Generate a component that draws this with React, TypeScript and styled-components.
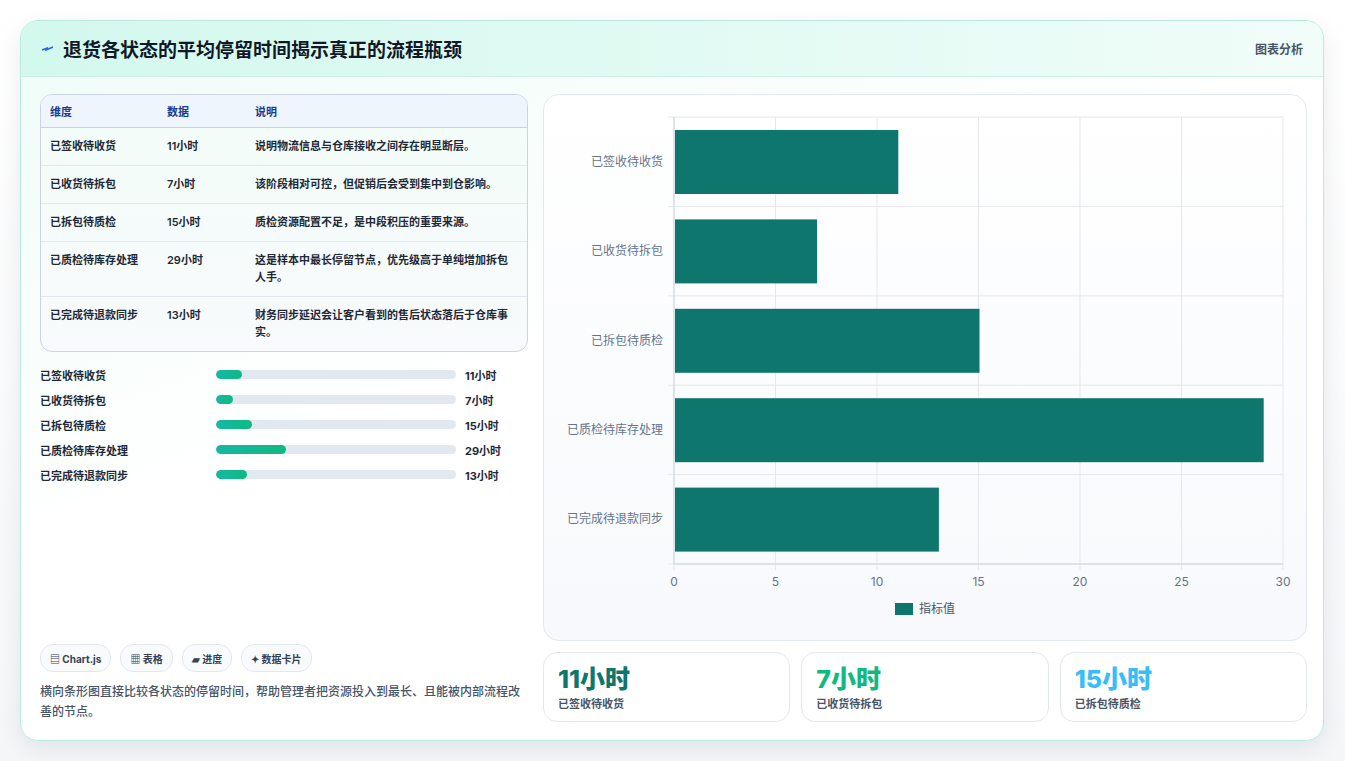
import styled, { createGlobalStyle } from "styled-components";

const GlobalStyle = createGlobalStyle`
  html, body { margin: 0; padding: 0; background: #f3f5f7; }
  body { font-family: Inter, "Noto Sans CJK SC", sans-serif; color: #1f2937; }
`;

const Page = styled.div`
  width: 1345px;
  height: 761px;
  padding: 20px 21px 22px 20px;
  box-sizing: border-box;
  background: linear-gradient(#ffffff 0%, #f4f6f8 100%);
`;

const Card = styled.div`
  height: 100%;
  border: 1px solid #b7ebe0;
  border-radius: 18px;
  background: linear-gradient(160deg, #eefcf7 0%, #ffffff 45%, #ffffff 100%);
  box-shadow: 0 8px 24px rgba(15, 23, 42, 0.08);
  overflow: hidden;
  display: flex;
  flex-direction: column;
`;

const Header = styled.div`
  height: 55px;
  flex-shrink: 0;
  display: flex;
  align-items: center;
  justify-content: space-between;
  padding: 0 20px;
  background: linear-gradient(90deg, #d3f8ee 0%, #e4fbf4 60%, #f1fdf9 100%);
  border-bottom: 1px solid #cdeee5;
`;

const Title = styled.h1`
  margin: 0;
  font-size: 19px;
  font-weight: 700;
  color: #111827;
  display: flex;
  align-items: center;
  gap: 8px;
`;

const HeaderLink = styled.span`
  font-size: 12px;
  color: #475569;
  font-weight: 600;
`;

const Body = styled.div`
  flex: 1;
  display: grid;
  grid-template-columns: 488px 1fr;
  gap: 15px;
  padding: 17px 18px 18px 19px;
  min-height: 0;
`;

const Left = styled.div`
  display: flex;
  flex-direction: column;
  min-height: 0;
`;

const TableBox = styled.div`
  border: 1px solid #cbd5e1;
  border-radius: 12px;
  overflow: hidden;
  background: linear-gradient(#f2fdf8, #f8fafc);
`;

const Table = styled.table`
  width: 100%;
  border-collapse: collapse;
  font-size: 11px;
  font-weight: 600;
  color: #1f2937;
  th {
    text-align: left;
    background: #eef5fd;
    color: #1e3a8a;
    font-weight: 700;
    height: 32px;
    padding: 0 9px;
    border-bottom: 1px solid #cbd5e1;
  }
  td {
    padding: 10px 9px;
    line-height: 17px;
    vertical-align: top;
    border-bottom: 1px solid #e2e8f0;
  }
  tr:last-child td { border-bottom: none; }
`;

const Bars = styled.div`
  margin-top: 10px;
  display: flex;
  flex-direction: column;
`;

const BarRow = styled.div`
  height: 25px;
  display: grid;
  grid-template-columns: 176px 240px 1fr;
  gap: 0 0;
  align-items: center;
  font-size: 11px;
  font-weight: 600;
`;

const Track = styled.div`
  height: 9px;
  border-radius: 5px;
  background: #e2e8f0;
  overflow: hidden;
`;

const Fill = styled.div`
  height: 100%;
  border-radius: 5px;
  background: linear-gradient(90deg, #14b8a6, #10b981);
`;

const BarValue = styled.span`
  padding-left: 9px;
  font-weight: 700;
`;

const Footer = styled.div`
  margin-top: auto;
`;

const Tags = styled.div`
  display: flex;
  gap: 9px;
`;

const Tag = styled.span`
  height: 26px;
  padding: 0 9px;
  border: 1px solid #e2e8f0;
  border-radius: 13px;
  background: #f8fafc;
  display: inline-flex;
  align-items: center;
  gap: 4px;
  font-size: 10px;
  font-weight: 700;
  color: #334155;
`;

const Note = styled.p`
  margin: 10px 0 0;
  font-size: 12px;
  line-height: 20px;
  color: #475569;
  font-weight: 500;
`;

const Right = styled.div`
  display: flex;
  flex-direction: column;
  gap: 11px;
  min-height: 0;
`;

const ChartPanel = styled.div`
  flex: 1;
  border: 1px solid #e2e8f0;
  border-radius: 16px;
  background: linear-gradient(#ffffff, #f7f9fc);
`;

const Stats = styled.div`
  display: grid;
  grid-template-columns: repeat(3, 1fr);
  gap: 11px;
  height: 73px;
`;

const Stat = styled.div`
  border: 1px solid #e2e8f0;
  border-radius: 14px;
  background: #ffffff;
  padding: 10px 14px;
  display: flex;
  flex-direction: column;
`;

const StatValue = styled.div<{ $color: string }>`
  font-size: 25px;
  font-weight: 800;
  line-height: 32px;
  color: ${(p) => p.$color};
`;

const StatLabel = styled.div`
  font-size: 11px;
  color: #475569;
  font-weight: 600;
`;

const rows = [
  { name: "已签收待收货", v: 11, d: "说明物流信息与仓库接收之间存在明显断层。" },
  { name: "已收货待拆包", v: 7, d: "该阶段相对可控，但促销后会受到集中到仓影响。" },
  { name: "已拆包待质检", v: 15, d: "质检资源配置不足，是中段积压的重要来源。" },
  { name: "已质检待库存处理", v: 29, d: "这是样本中最长停留节点，优先级高于单纯增加拆包人手。" },
  { name: "已完成待退款同步", v: 13, d: "财务同步延迟会让客户看到的售后状态落后于仓库事实。" },
];

function Chart() {
  const x0 = 130, x1 = 739, y0 = 22, y1 = 469;
  const unit = (x1 - x0) / 30;
  const band = (y1 - y0) / 5;
  return (
    <svg width="762" height="541" viewBox="0 0 762 541">
      {[0, 5, 10, 15, 20, 25, 30].map((t) => (
        <g key={t}>
          <line x1={x0 + t * unit} x2={x0 + t * unit} y1={y0} y2={y1 + 6} stroke="#e5e7eb" />
          <text x={x0 + t * unit} y={y1 + 22} fontSize="12" fill="#64748b" textAnchor="middle" fontFamily="Inter, sans-serif">{t}</text>
        </g>
      ))}
      {[0, 1, 2, 3, 4, 5].map((i) => (
        <line key={i} x1={x0 - 6} x2={x1} y1={y0 + i * band} y2={y0 + i * band} stroke="#e5e7eb" />
      ))}
      <line x1={x0} x2={x0} y1={y0} y2={y1} stroke="#cbd5e1" />
      <line x1={x0} x2={x1} y1={y1} y2={y1} stroke="#cbd5e1" />
      {rows.map((r, i) => (
        <g key={r.name}>
          <rect x={x0 + 1} y={y0 + i * band + 13} width={r.v * unit} height={64} fill="#0f766e" />
          <text x={x0 - 11} y={y0 + i * band + band / 2 + 4} fontSize="12" fill="#64748b" textAnchor="end" fontFamily="'Noto Sans CJK SC', sans-serif">{r.name}</text>
        </g>
      ))}
      <rect x="351" y="508" width="18" height="12" fill="#0f766e" />
      <text x="375" y="518" fontSize="12" fill="#475569" fontFamily="'Noto Sans CJK SC', sans-serif">指标值</text>
    </svg>
  );
}

export default function App() {
  return (
    <Page>
      <GlobalStyle />
      <Card>
        <Header>
          <Title>
            <svg width="14" height="10" viewBox="0 0 14 10">
              <path d="M1 6 L6 4 L5 6 L12 3" stroke="#2563eb" strokeWidth="1.4" fill="none" />
            </svg>
            退货各状态的平均停留时间揭示真正的流程瓶颈
          </Title>
          <HeaderLink>图表分析</HeaderLink>
        </Header>
        <Body>
          <Left>
            <TableBox>
              <Table>
                <colgroup>
                  <col style={{ width: 117 }} />
                  <col style={{ width: 88 }} />
                  <col />
                </colgroup>
                <thead>
                  <tr><th>维度</th><th>数据</th><th>说明</th></tr>
                </thead>
                <tbody>
                  {rows.map((r) => (
                    <tr key={r.name}><td>{r.name}</td><td>{r.v}小时</td><td>{r.d}</td></tr>
                  ))}
                </tbody>
              </Table>
            </TableBox>
            <Bars>
              {rows.map((r) => (
                <BarRow key={r.name}>
                  <span>{r.name}</span>
                  <Track><Fill style={{ width: `${r.v}%` }} /></Track>
                  <BarValue>{r.v}小时</BarValue>
                </BarRow>
              ))}
            </Bars>
            <Footer>
              <Tags>
                <Tag>▤ Chart.js</Tag>
                <Tag>▦ 表格</Tag>
                <Tag>▰ 进度</Tag>
                <Tag>✦ 数据卡片</Tag>
              </Tags>
              <Note>横向条形图直接比较各状态的停留时间，帮助管理者把资源投入到最长、且能被内部流程改善的节点。</Note>
            </Footer>
          </Left>
          <Right>
            <ChartPanel><Chart /></ChartPanel>
            <Stats>
              <Stat><StatValue $color="#0f766e">11小时</StatValue><StatLabel>已签收待收货</StatLabel></Stat>
              <Stat><StatValue $color="#10b981">7小时</StatValue><StatLabel>已收货待拆包</StatLabel></Stat>
              <Stat><StatValue $color="#38bdf8">15小时</StatValue><StatLabel>已拆包待质检</StatLabel></Stat>
            </Stats>
          </Right>
        </Body>
      </Card>
    </Page>
  );
}
